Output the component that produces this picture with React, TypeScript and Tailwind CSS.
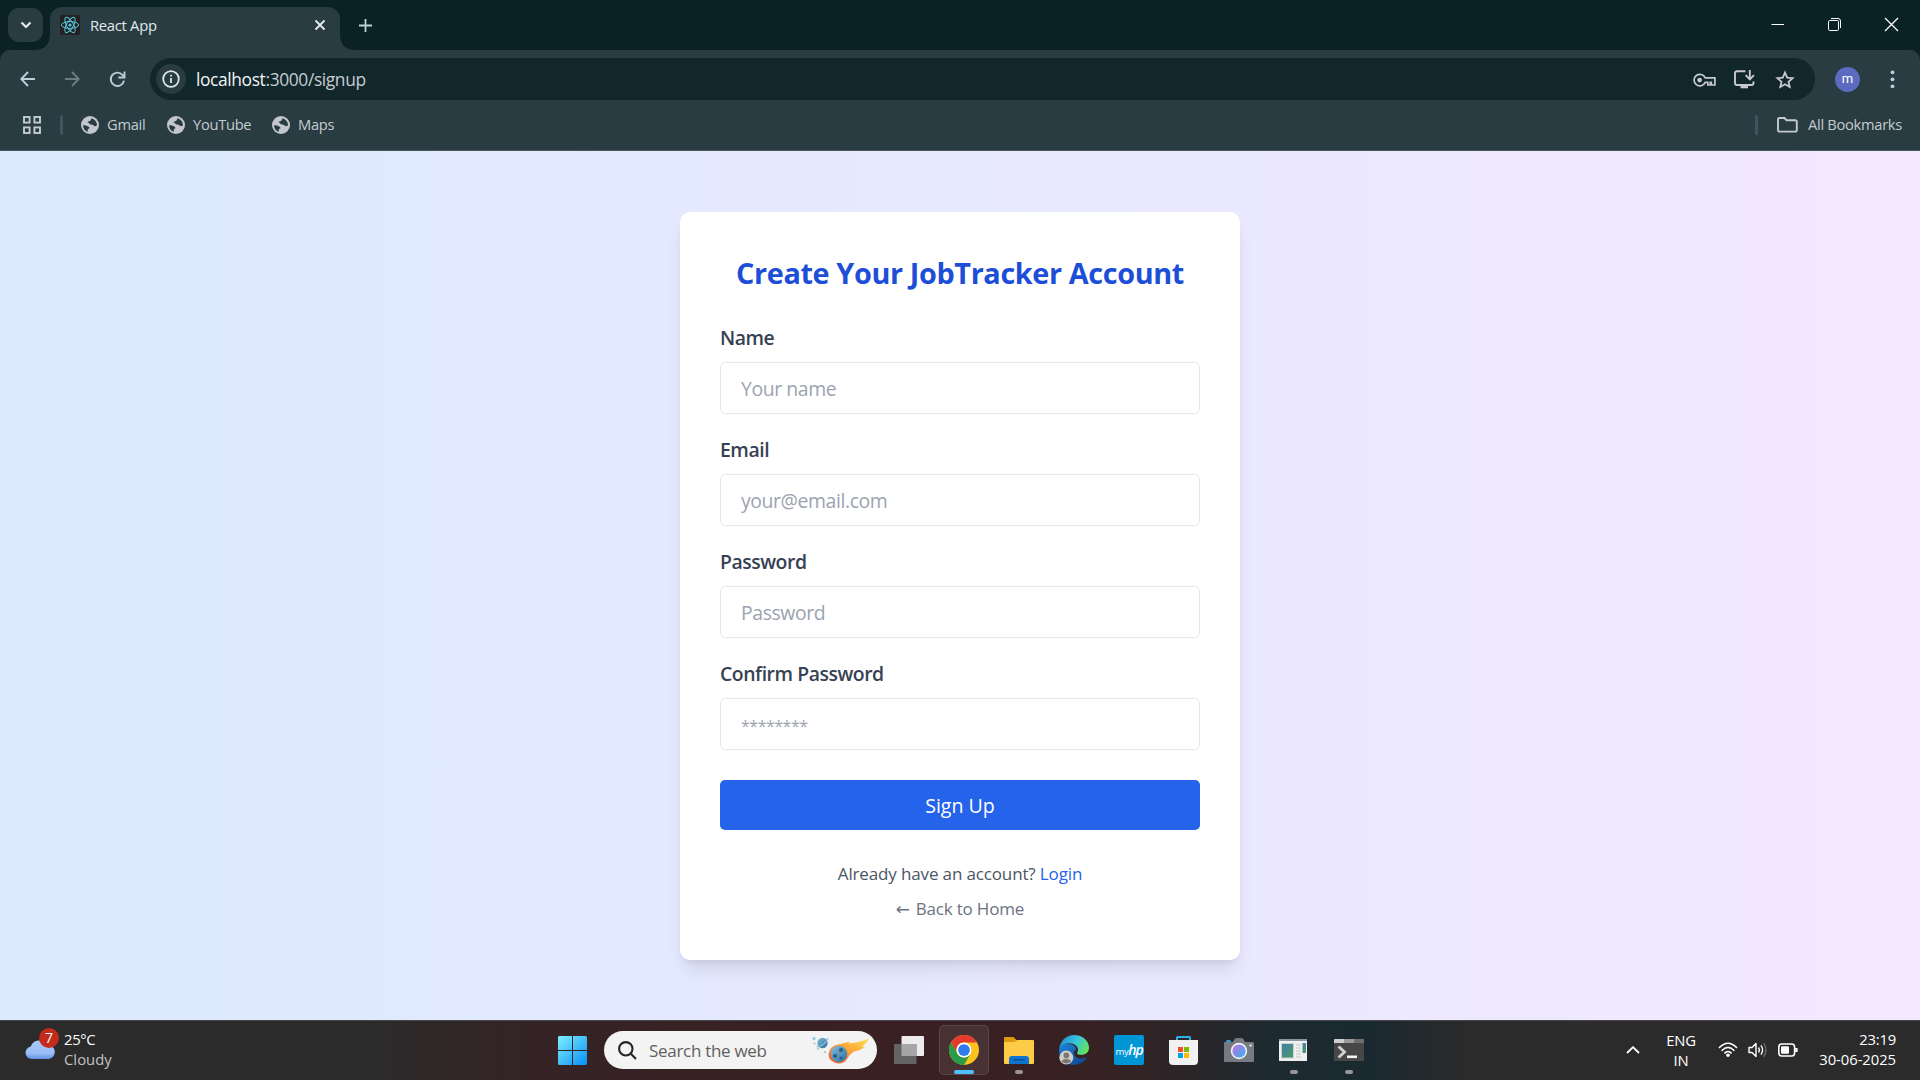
import React from "react";

const Globe = () => (
  <svg width="18" height="18" viewBox="0 0 18 18" className="shrink-0">
    <circle cx="9" cy="9" r="9" fill="#c3c7cc" />
    <path d="M2 9.2 C4 9 6.5 9.6 8 11 C9 12 8.2 13 6.8 13 V15.8 C4 15 2 12.5 2 9.2Z" fill="#283c42" />
    <path d="M10.5 2.2 C13.5 3 16 5.8 16 9.2 C15 10.4 13.4 10.8 12.6 9.6 C12 8.6 10.6 9 9.6 8.6 C8 8 8 6.4 6.4 6.2 C7 5 9.6 5.4 9.8 4 Z" fill="#283c42" />
  </svg>
);

const Bookmark = ({ label, className }: { label: string; className: string }) => (
  <div className={`flex items-center gap-[8px] ${className}`}>
    <Globe />
    <span className="mb-[2px] whitespace-nowrap">{label}</span>
  </div>
);

const TabStrip = () => (
  <div className="flex h-[50px] items-start bg-[#0a2226] pl-2">
    <div className="mt-2 flex h-[34px] w-[35px] items-center justify-center rounded-[11px] bg-[#283c42]">
      <svg width="12" height="8" viewBox="0 0 12 8" fill="none" stroke="#e3e8ea" strokeWidth="2.2">
        <path d="M1.5 1.5 L6 6 L10.5 1.5" />
      </svg>
    </div>
    <svg width="16" height="50" viewBox="0 0 16 50" className="-ml-[9px] shrink-0">
      <path d="M0 50 Q16 50 16 34 V50 Z" fill="#283c42" />
    </svg>
    <div className="mt-[7px] flex h-[43px] w-[290px] items-start rounded-t-[12px] bg-[#283c42] pt-2 pl-[10px]">
      <svg width="20" height="20" viewBox="0 0 20 20" fill="none" stroke="#58c4dc" strokeWidth="1">
        <rect width="20" height="20" rx="2" fill="#222222" stroke="none" />
        <ellipse cx="10" cy="10" rx="8.6" ry="3.4" />
        <ellipse cx="10" cy="10" rx="8.6" ry="3.4" transform="rotate(60 10 10)" />
        <ellipse cx="10" cy="10" rx="8.6" ry="3.4" transform="rotate(120 10 10)" />
        <circle cx="10" cy="10" r="1.6" fill="#58c4dc" stroke="none" />
      </svg>
      <span className="ml-[10px] text-[14.8px] leading-5 tracking-[-0.3px] text-[#e3e8ea]">React App</span>
      <svg width="12" height="12" viewBox="0 0 12 12" className="mt-1 mr-[14px] ml-auto" stroke="#e8ecee" strokeWidth="1.8">
        <path d="M1.5 1.5 L10.5 10.5 M10.5 1.5 L1.5 10.5" />
      </svg>
    </div>
    <svg width="16" height="50" viewBox="0 0 16 50" className="shrink-0">
      <path d="M16 50 Q0 50 0 34 V50 Z" fill="#283c42" />
    </svg>
    <svg width="13" height="13" viewBox="0 0 13 13" className="mt-[19px] ml-[3px]" stroke="#b9d3d8" strokeWidth="1.8">
      <path d="M6.5 0 V13 M0 6.5 H13" />
    </svg>
    <div className="mt-[17px] mr-[21px] ml-auto flex items-center gap-[42px]">
      <svg width="13" height="14" viewBox="0 0 13 14" stroke="#ffffff" className="mr-px">
        <path d="M0.5 6.5 H13" />
      </svg>
      <svg width="15" height="15" viewBox="0 0 15 15" fill="none" stroke="#ffffff">
        <path d="M4 1.5 H11 Q13.5 1.5 13.5 4 V11" />
        <rect x="1.5" y="3.5" width="10" height="10" rx="1.2" />
      </svg>
      <svg width="15" height="15" viewBox="0 0 15 15" stroke="#ffffff" strokeWidth="1.3">
        <path d="M1 1 L14 14 M14 1 L1 14" />
      </svg>
    </div>
  </div>
);

const Toolbar = () => (
  <div className="flex h-[58px] items-center pl-5">
    <svg width="15" height="16" viewBox="0 0 15 16" fill="none" stroke="#b9d0d6" strokeWidth="1.9">
      <path d="M15 8 H1.5 M8 1 L1.3 8 L8 15" />
    </svg>
    <svg width="15" height="16" viewBox="0 0 15 16" fill="none" stroke="#6b7b80" strokeWidth="1.9" className="ml-[30px]">
      <path d="M0 8 H13.5 M7 1 L13.7 8 L7 15" />
    </svg>
    <svg width="17" height="17" viewBox="0 0 17 17" fill="none" stroke="#b9d0d6" strokeWidth="1.9" className="ml-[29px]">
      <path d="M15 9.6 A6.7 6.7 0 1 1 13.4 3.8 L15.2 5.8" />
      <path d="M15.5 0.5 V6.5 H9.3" />
    </svg>
    <div className="ml-6 flex h-[42px] w-[1665px] items-center rounded-full bg-[#12272c] pl-[6px]">
      <div className="flex size-[30px] items-center justify-center rounded-full bg-[#283c42]">
        <svg width="18" height="18" viewBox="0 0 18 18" fill="none" stroke="#dfe5e7" strokeWidth="1.8">
          <circle cx="9" cy="9" r="7.8" />
          <path d="M9 8 V13 M9 4.7 V6.6" />
        </svg>
      </div>
      <span className="ml-[10px] text-[17.4px] leading-6 tracking-[-0.38px] text-[#f1f4f5]">
        localhost<span className="text-[#c4cccf]">:3000/signup</span>
      </span>
      <svg width="23" height="14" viewBox="0 0 23 14" fill="none" stroke="#c7c9cc" strokeWidth="1.7" className="mt-px mr-[18px] ml-auto">
        <path d="M12.2 4.8 A5.8 5.8 0 1 0 12.2 9.4 H14.8 V12 H17.3 V9.4 H18.3 V12 H21.9 V4.8 Z" />
        <circle cx="6.6" cy="7.1" r="2.4" fill="#c7c9cc" stroke="none" />
      </svg>
      <svg width="21" height="19" viewBox="0 0 21 19" fill="none" stroke="#c7c9cc" strokeWidth="1.9" className="mt-px mr-5">
        <path d="M11.5 1.2 H3 Q1 1.2 1 3.2 V13 Q1 15 3 15 H17.5 Q19.5 15 19.5 13 V11.5" />
        <path d="M15.8 0 V8.6 M11.6 5.2 L15.8 9.4 L20 5.2" />
        <path d="M6.5 16.8 H14" strokeWidth="3" />
      </svg>
      <svg width="20" height="20" viewBox="0 0 20 20" fill="none" stroke="#c7c9cc" strokeWidth="1.8" className="mt-px mr-5">
        <path d="M10 2.6 L12.2 7.6 L17.6 8.1 L13.5 11.7 L14.7 17 L10 14.2 L5.3 17 L6.5 11.7 L2.4 8.1 L7.8 7.6 Z" />
      </svg>
    </div>
    <div className="ml-5 flex size-[25px] items-center justify-center rounded-full bg-[#5c6bc0] font-['Roboto'] text-[13px] leading-none text-white">
      <span className="-mt-px">m</span>
    </div>
    <svg width="5" height="19" viewBox="0 0 5 19" fill="#b9d0d6" className="ml-[30px]">
      <circle cx="2.5" cy="2.3" r="1.9" />
      <circle cx="2.5" cy="9.3" r="1.9" />
      <circle cx="2.5" cy="16.3" r="1.9" />
    </svg>
  </div>
);

const BookmarksBar = () => (
  <div className="flex h-[43px] items-center border-b border-[#46565b] pb-[9px] pl-[23px] text-[14.7px] leading-5 tracking-[-0.3px] text-[#c5cbcd]">
    <svg width="18" height="18" viewBox="0 0 18 18" fill="none" stroke="#c5cbcd" strokeWidth="1.9">
      <rect x="1" y="1" width="5.6" height="5.6" />
      <rect x="11.4" y="1" width="5.6" height="5.6" />
      <rect x="1" y="11.4" width="5.6" height="5.6" />
      <rect x="11.4" y="11.4" width="5.6" height="5.6" />
    </svg>
    <div className="ml-[19px] h-5 w-[3px] rounded-full bg-[#40555b]" />
    <Bookmark label="Gmail" className="ml-[18px] w-[86px]" />
    <Bookmark label="YouTube" className="w-[105px]" />
    <Bookmark label="Maps" className="w-[80px]" />
    <div className="ml-auto h-5 w-[3px] rounded-full bg-[#40555b]" />
    <svg width="21" height="16" viewBox="0 0 21 16" fill="none" stroke="#c5cbcd" strokeWidth="1.9" className="ml-[19px]">
      <path d="M1 2.5 Q1 1 2.5 1 H7.5 L9.5 3.2 H18 Q19.8 3.2 19.8 4.8 V13 Q19.8 14.6 18 14.6 H2.8 Q1 14.6 1 13 Z" />
    </svg>
    <span className="mb-[2px] ml-[10px] w-[112px] whitespace-nowrap">All Bookmarks</span>
  </div>
);

const Field = ({ label, placeholder, masked }: { label: string; placeholder: string; masked?: boolean }) => (
  <label className="flex h-[112px] flex-col">
    <span className="h-[38px] text-[19.4px] leading-[27px] font-semibold tracking-[-0.45px] text-gray-700">{label}</span>
    <input
      className={`h-[52px] w-full rounded-[5px] border border-[#e5e7eb] px-5 text-gray-700 placeholder:text-[#9ca3af] ${
        masked ? "pt-[4px] text-[16px] tracking-[-0.5px]" : "pt-px text-[19.4px] tracking-[-0.4px]"
      }`}
      placeholder={placeholder}
    />
  </label>
);

const SignupCard = () => (
  <form className="flex h-[748px] w-[560px] flex-col rounded-[10px] bg-white px-10 pt-[40px] shadow-[0_12px_19px_-4px_rgba(0,0,0,0.1),0_5px_8px_-5px_rgba(0,0,0,0.1)]">
    <h2 className="mb-[31px] h-[41px] text-center text-[28.8px] leading-[41px] font-bold tracking-[-0.36px] whitespace-nowrap text-[#1d4ed8]">
      Create Your JobTracker Account
    </h2>
    <Field label="Name" placeholder="Your name" />
    <Field label="Email" placeholder="your@email.com" />
    <Field label="Password" placeholder="Password" />
    <Field label="Confirm Password" placeholder="********" masked />
    <button type="button" className="mt-[8px] h-[50px] shrink-0 rounded-[5px] bg-[#2563eb] pt-px text-[19.6px] text-white">
      Sign Up
    </button>
    <p className="mt-[31px] h-[25px] text-center text-[17px] leading-[25px] tracking-[-0.14px] text-[#4b5563]">
      Already have an account? <a className="text-[#2563eb]">Login</a>
    </p>
    <p className="mt-[10px] h-[25px] text-center text-[17px] leading-[25px] tracking-[-0.18px] text-[#6b7280]">
      <span className="mr-[1.5px] font-['DejaVu_Sans'] text-[17px] leading-none">←</span> Back to Home
    </p>
  </form>
);

const TaskItem = ({ children, active, open }: { children: React.ReactNode; active?: boolean; open?: boolean }) => (
  <div
    className={`relative flex h-[50px] w-[50px] items-center justify-center rounded-[5px] ${
      active ? "border border-white/10 bg-white/8" : ""
    }`}
  >
    {children}
    {active && <span className="absolute bottom-0 h-1 w-5 rounded-full bg-[#4cc2ff]" />}
    {open && <span className="absolute bottom-px h-1 w-2 rounded-full bg-[#9a9596]" />}
  </div>
);

const StartLogo = () => (
  <svg width="29" height="29" viewBox="0 0 29 29">
    <defs>
      <linearGradient id="win" x1="0" y1="0" x2="1" y2="1" gradientUnits="objectBoundingBox">
        <stop offset="0" stopColor="#7df0ff" />
        <stop offset="1" stopColor="#0a8ef5" />
      </linearGradient>
    </defs>
    <path d="M1 0 H14 V14 H0 V1 Z M15 0 H28 L29 1 V14 H15 Z M0 15 H14 V29 H1 L0 28 Z M15 15 H29 V28 L28 29 H15 Z" fill="url(#win)" />
  </svg>
);

const Comet = () => (
  <svg width="60" height="32" viewBox="0 0 60 32">
    <defs>
      <linearGradient id="flame" x1="0" y1="1" x2="1" y2="0">
        <stop offset="0" stopColor="#f2502f" />
        <stop offset=".5" stopColor="#fba23a" />
        <stop offset="1" stopColor="#ffe14d" />
      </linearGradient>
      <linearGradient id="rock" x1="0" y1="0" x2="1" y2="1">
        <stop offset="0" stopColor="#7fc0df" />
        <stop offset="1" stopColor="#2f6d9a" />
      </linearGradient>
    </defs>
    <circle cx="10.5" cy="9" r="5.2" fill="url(#rock)" />
    <path d="M4.5 12.5 Q13 12 16 4" fill="none" stroke="#8fb8d0" strokeWidth="1.2" />
    <circle cx="2" cy="4.5" r="1.5" fill="#8cc3dd" />
    <circle cx="2.5" cy="9.5" r="1" fill="#8cc3dd" />
    <circle cx="6" cy="14.5" r="1.3" fill="#a8cfe0" />
    <circle cx="13" cy="18" r="1" fill="#8cc3dd" />
    <path d="M16.5 20 Q18 11.5 26 10.5 L38 7.5 L36.5 9.5 Q48 8.5 57 4.5 Q54.5 9.5 50 12.5 L53 12.5 Q48 17 42 17.5 Q38 20 35.5 24.5 Q32 30 26 29.5 Q16.5 28 16.5 20Z" fill="url(#flame)" />
    <circle cx="27" cy="20" r="8.2" fill="url(#rock)" />
    <circle cx="29" cy="16" r="2" fill="#2b5c83" />
    <circle cx="23" cy="22" r="2" fill="#2b5c83" />
    <circle cx="29" cy="24" r="1.6" fill="#2b5c83" />
  </svg>
);

const ChromeLogo = () => (
  <svg width="30" height="30" viewBox="0 0 48 48" className="shrink-0">
    <circle cx="24" cy="24" r="24" fill="#fcc31e" />
    <path d="M3.2 12 A24 24 0 0 1 44.8 12 L24 12 A12 12 0 0 0 13.6 30 Z" fill="#e33b2e" />
    <path d="M3.2 12 A24 24 0 0 0 24 48 L34.4 30 A12 12 0 0 1 13.6 30 Z" fill="#2a9b48" />
    <circle cx="24" cy="24" r="12" fill="#fff" />
    <circle cx="24" cy="24" r="9.4" fill="#2f7bee" />
  </svg>
);

const EdgeLogo = () => (
  <svg width="30" height="30" viewBox="0 0 30 30">
    <defs>
      <linearGradient id="edgeTop" x1="0" y1="0.3" x2="1" y2="0.7">
        <stop offset="0" stopColor="#1f8fd8" />
        <stop offset=".5" stopColor="#36c5dc" />
        <stop offset="1" stopColor="#66e654" />
      </linearGradient>
      <linearGradient id="edgeBase" x1="0" y1="0" x2="1" y2="1">
        <stop offset="0" stopColor="#1c86dd" />
        <stop offset="1" stopColor="#0c3f86" />
      </linearGradient>
    </defs>
    <path d="M0.3 14 C2 9 8 7.5 13 9.5 C16.5 11 17.5 13.5 17 15 C14.5 16 14 19 16.5 21.5 C19.5 24.5 24.5 24 28.3 21.6 C26 26.8 21 30 15 30 C6.5 30 0 23.5 0 15Z" fill="url(#edgeBase)" />
    <path d="M0.3 13.5 C1.2 5.8 7.5 0 15 0 C24 0 30 6.4 30 12.5 C30 17.6 26.4 19.8 22.8 19.8 C19.4 19.8 17.4 18.6 18.2 17.4 C19.6 15.6 19.4 12.6 16.8 10.4 C12.4 6.8 3.6 8 0.3 13.5Z" fill="url(#edgeTop)" />
    <circle cx="7.3" cy="22.6" r="7" fill="#d0cdcb" />
    <circle cx="7.3" cy="20.4" r="2.8" fill="#7b7573" />
    <path d="M2.6 26.8 Q2.8 23.9 7.3 23.9 Q11.8 23.9 12 26.8 Q7.3 30.3 2.6 26.8Z" fill="#7b7573" />
  </svg>
);

const Taskbar = () => (
  <div className="flex h-[60px] items-start border-t border-[#4a4748] bg-[linear-gradient(90deg,#2b2b2b_0,#2b2b2b_360px,#352325_540px,#3a2022_900px,#382123_1080px,#2b2528_1190px,#1d2a30_1270px,#1a2930_1370px,#2b2b2b_1470px,#2b2b2b_100%)] text-[14.8px] leading-5 tracking-[-0.05px] text-white">
    <div className="flex w-[558px] items-start pl-[25px]">
      <div className="relative mt-[17px] h-[22px] w-[30px]">
        <svg width="30" height="22" viewBox="0 0 30 22">
          <defs>
            <linearGradient id="cloud" x1="0" y1="0" x2="0" y2="1">
              <stop offset="0" stopColor="#a9c9fa" />
              <stop offset=".7" stopColor="#9bbdf5" />
              <stop offset="1" stopColor="#5f8fe3" />
            </linearGradient>
          </defs>
          <path d="M6.5 21 A6.3 6.3 0 0 1 5.8 8.5 A9 9 0 0 1 22 7 A7 7 0 0 1 23.5 21 Z" fill="url(#cloud)" />
        </svg>
        <span className="absolute -top-[10px] left-[14px] flex size-5 items-center justify-center rounded-full bg-[#c42b1c] text-[14px]">7</span>
      </div>
      <div className="mt-[8px] ml-[9px]">
        <div className="tracking-[-0.3px]">25°C</div>
        <div className="tracking-[0.05px] text-[#c2c2c2]">Cloudy</div>
      </div>
    </div>
    <div className="mt-[15px]">
      <StartLogo />
    </div>
    <div className="mt-[10px] ml-[17px] flex h-[38px] w-[273px] items-center rounded-full bg-[#f3f3f3] pl-[14px]">
      <svg width="19" height="19" viewBox="0 0 19 19" fill="none" stroke="#242424" strokeWidth="2.1">
        <circle cx="7.8" cy="7.8" r="6.7" />
        <path d="M12.6 12.6 L18 18" />
      </svg>
      <span className="mt-px ml-3 text-[17px] tracking-[-0.3px] text-[#5f5f5f]">Search the web</span>
      <div className="mr-[5px] ml-auto">
        <Comet />
      </div>
    </div>
    <div className="mt-1 ml-[7px] flex gap-[5px]">
      <TaskItem>
        <svg width="30" height="28" viewBox="0 0 30 28">
          <rect x="7.5" width="22.5" height="20" rx="1" fill="#ececec" />
          <rect y="8" width="22.5" height="20" rx="1" fill="#656464" />
          <path d="M7.5 8 H22.5 V20 H7.5Z" fill="#a6a6a6" />
        </svg>
      </TaskItem>
      <TaskItem active>
        <ChromeLogo />
      </TaskItem>
      <TaskItem open>
        <svg width="30" height="27" viewBox="0 0 30 27">
          <path d="M0 1 Q0 0 1 0 H9.5 L12.5 3 V9 H0Z" fill="#dd9a0c" />
          <path d="M0 5 H10 L13 3 H29 Q30 3 30 4 V26 Q30 27 29 27 H1 Q0 27 0 26Z" fill="#fdcb45" />
          <path d="M5 27 V22 Q5 19 8 19 H22 Q25 19 25 22 V27Z" fill="#0f74cf" />
          <path d="M9.5 22.8 H20.5" stroke="#0b4d90" strokeWidth="1.4" />
        </svg>
      </TaskItem>
      <TaskItem>
        <EdgeLogo />
      </TaskItem>
      <TaskItem>
        <div className="flex size-[30px] items-baseline justify-center rounded-[2px] bg-[#0096d6] pt-[8px] text-[9.5px] leading-none font-medium tracking-[-0.4px]">
          my<span className="text-[14px] leading-none font-semibold tracking-[-1.2px] italic">hp</span>
        </div>
      </TaskItem>
      <TaskItem>
        <svg width="29" height="29" viewBox="0 0 29 29" className="mr-px">
          <path d="M8 5 V1.5 Q8 1 8.5 1 H20.5 Q21 1 21 1.5 V5" fill="none" stroke="#29b1ea" strokeWidth="2" />
          <path d="M0 4 H29 V25 Q29 29 25 29 H4 Q0 29 0 25Z" fill="#f1f1f1" />
          <path d="M9 11 H14 V16 H9Z" fill="#f25022" />
          <path d="M15 11 H20 V16 H15Z" fill="#7fba00" />
          <path d="M9 17 H14 V22 H9Z" fill="#00a4ef" />
          <path d="M15 17 H20 V22 H15Z" fill="#ffb900" />
        </svg>
      </TaskItem>
      <TaskItem>
        <svg width="30" height="24" viewBox="0 0 30 24">
          <defs>
            <linearGradient id="lens" x1="0" y1="0" x2="1" y2="1">
              <stop offset="0" stopColor="#c86fe0" />
              <stop offset="1" stopColor="#2fb4f2" />
            </linearGradient>
          </defs>
          <rect x="2" y="2" width="5" height="4" rx="1.5" fill="#2aa0e6" />
          <path d="M0 5 Q0 4 1 4 H9 Q10.5 0 13 0 H17 Q19.5 0 21 4 H29 Q30 4 30 5 V23 Q30 24 29 24 H1 Q0 24 0 23Z" fill="#757b80" />
          <circle cx="15" cy="13" r="8.2" fill="#f2f2f2" />
          <circle cx="15" cy="13" r="6.6" fill="url(#lens)" />
          <circle cx="26.5" cy="7.5" r="1.3" fill="#d7dbde" />
        </svg>
      </TaskItem>
      <TaskItem open>
        <svg width="28" height="22" viewBox="0 0 28 22" className="mr-[2px] mb-px">
          <defs>
            <linearGradient id="pane" x1="0" y1="0" x2="1" y2="1">
              <stop offset="0" stopColor="#3f7fa8" />
              <stop offset="1" stopColor="#4f9a63" />
            </linearGradient>
          </defs>
          <rect width="28" height="22" fill="#f0f0f0" />
          <rect width="28" height="2" fill="#8b97a6" />
          <rect x="2.5" y="4.5" width="12" height="14.5" fill="url(#pane)" stroke="#c8d4d4" />
          <path d="M17 6 H22 M17 9 H22 M17 12 H22 M17 15 H22 M17 18 H22" stroke="#c3c6ca" />
          <rect x="23.5" y="4" width="3.5" height="10" fill="url(#pane)" />
        </svg>
      </TaskItem>
      <TaskItem open>
        <svg width="30" height="22" viewBox="0 0 30 22">
          <rect width="30" height="22" rx="1" fill="#474747" />
          <path d="M0 1 Q0 0 1 0 H10 V4 H0Z" fill="#cfcfcf" />
          <rect x="10" width="10" height="4" fill="#9a9a9a" />
          <path d="M20 0 H29 Q30 0 30 1 V4 H20Z" fill="#6f6f6f" />
          <path d="M4.5 7.5 L10.5 13 L4.5 18.5" fill="none" stroke="#d2d2d2" strokeWidth="2.8" />
          <rect x="13" y="16.5" width="10" height="2.6" fill="#f3f3f3" />
        </svg>
      </TaskItem>
    </div>
    <svg width="14" height="8" viewBox="0 0 14 8" fill="none" stroke="#fff" strokeWidth="1.8" className="mt-[25px] ml-auto">
      <path d="M1 7 L7 1.2 L13 7" />
    </svg>
    <div className="mt-[9px] ml-[20px] w-[42px] text-center">
      <div className="tracking-[-0.2px]">ENG</div>
      <div>IN</div>
    </div>
    <svg width="20" height="16" viewBox="0 0 20 16" fill="none" stroke="#fff" strokeWidth="1.6" className="mt-[21px] ml-[16px]">
      <path d="M1 6 Q10 -3.6 19 6" />
      <path d="M3.6 8.8 Q10 2 16.4 8.8" />
      <path d="M6.4 11.4 Q10 7.6 13.6 11.4" />
      <circle cx="10" cy="13.3" r="1.8" fill="#fff" stroke="none" />
    </svg>
    <svg width="20" height="18" viewBox="0 0 20 18" fill="none" stroke="#fff" strokeWidth="1.4" className="mt-[20px] ml-[10px]">
      <path d="M1 6.5 H4 L8 2.5 V15.5 L4 11.5 H1 Z" strokeLinejoin="round" />
      <path d="M10.6 6.5 Q12.2 9 10.6 11.5 M13 4.4 Q16.2 9 13 13.6" />
      <path d="M15.6 2.2 Q20.4 9 15.6 15.8" stroke="#6a6a6a" />
    </svg>
    <svg width="20" height="14" viewBox="0 0 20 14" fill="none" stroke="#fff" strokeWidth="1.6" className="mt-[22px] ml-[10px]">
      <rect x="0.8" y="1" width="15.8" height="12" rx="3" />
      <rect x="3" y="3.2" width="8" height="7.6" rx="1" fill="#fff" stroke="none" />
      <path d="M18.4 5 V9" strokeWidth="2.4" />
    </svg>
    <div className="mt-[8px] mr-6 ml-[12px] w-[86px] text-right">
      <div className="tracking-[-0.2px]">23:19</div>
      <div>30-06-2025</div>
    </div>
  </div>
);

export default function App() {
  return (
    <div className="flex h-[1080px] w-[1920px] flex-col overflow-hidden font-['Open_Sans','Noto_Sans',sans-serif]">
      <div className="bg-[#0a2226]">
        <TabStrip />
        <div className="rounded-t-[10px] bg-[#283c42]">
          <Toolbar />
          <BookmarksBar />
        </div>
      </div>
      <main className="flex flex-1 items-start justify-center bg-[linear-gradient(90deg,#dbeafe,#f3e8ff)] pt-[61px]">
        <SignupCard />
      </main>
      <Taskbar />
    </div>
  );
}
